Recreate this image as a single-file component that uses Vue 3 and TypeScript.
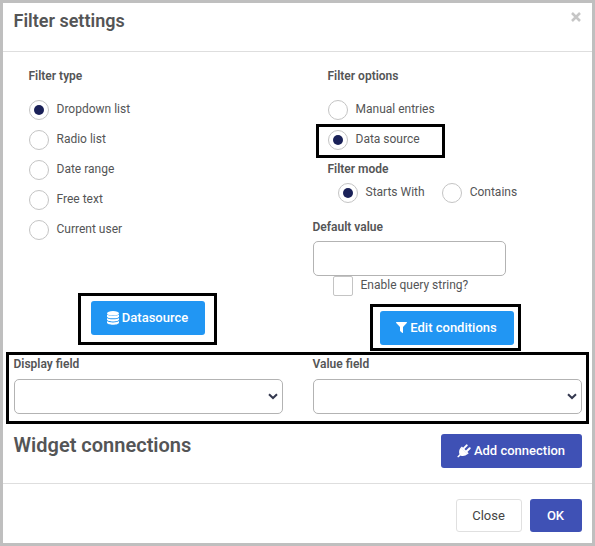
<script setup lang="ts">
import { ref } from 'vue'

const filterTypes: string[] = ['Dropdown list', 'Radio list', 'Date range', 'Free text', 'Current user']
const filterOptions: string[] = ['Manual entries', 'Data source']
const filterModes: string[] = ['Starts With', 'Contains']

const filterType = ref('Dropdown list')
const filterOption = ref('Data source')
const filterMode = ref('Starts With')
const defaultValue = ref('')
const queryString = ref(false)
</script>

<template>
  <div class="dialog">
    <header class="header">
      <h1 class="title">Filter settings</h1>
      <button class="dismiss" aria-label="Close dialog">
        <svg width="10" height="10" viewBox="0 0 10 10"><path d="M1 1L9 9M9 1L1 9" stroke="#c6c6c6" stroke-width="2.5" /></svg>
      </button>
    </header>

    <main class="body">
      <div class="columns">
        <section class="types">
          <h2 class="label inset">Filter type</h2>
          <div class="radios inset">
            <label v-for="t in filterTypes" :key="t" class="choice">
              <input v-model="filterType" type="radio" name="type" :value="t" class="radio" />
              <span>{{ t }}</span>
            </label>
          </div>
          <div class="marked mark-source">
            <button class="btn info source">
              <svg width="12" height="14" viewBox="0 0 12 14" fill="#fff">
                <ellipse cx="6" cy="2.3" rx="6" ry="2.3" />
                <path d="M0 3.6C1.2 5.5 10.8 5.5 12 3.6V5.4C12 8 0 8 0 5.4ZM0 6.9C1.2 8.8 10.8 8.8 12 6.9V8.5C12 11.1 0 11.1 0 8.5ZM0 10C1.2 11.9 10.8 11.9 12 10V11.6C12 14.6 0 14.6 0 11.6Z" />
              </svg>
              <span>Datasource</span>
            </button>
          </div>
        </section>

        <section class="options">
          <h2 class="label inset">Filter options</h2>
          <div class="radios inset">
            <label v-for="o in filterOptions" :key="o" class="choice" :class="{ 'marked mark-option': o === 'Data source' }">
              <input v-model="filterOption" type="radio" name="option" :value="o" class="radio" />
              <span>{{ o }}</span>
            </label>
          </div>
          <h2 class="label inset mode-label">Filter mode</h2>
          <div class="modes">
            <label v-for="m in filterModes" :key="m" class="choice mode">
              <input v-model="filterMode" type="radio" name="mode" :value="m" class="radio" />
              <span>{{ m }}</span>
            </label>
          </div>
          <h2 class="label default-label">Default value</h2>
          <input v-model="defaultValue" type="text" class="field default" aria-label="Default value" />
          <label class="choice query">
            <input v-model="queryString" type="checkbox" class="check" />
            <span>Enable query string?</span>
          </label>
          <div class="marked mark-edit">
            <button class="btn info edit">
              <svg width="11" height="11" viewBox="0 0 11 11" fill="#fff"><path d="M.4 0H10.6Q11.3.4 10.8 1L7 5V10.4Q6.8 11.2 6.1 10.8L4.3 9.2Q4 9 4 8.5V5L.2 1Q-.2.4.4 0Z" /></svg>
              <span>Edit conditions</span>
            </button>
          </div>
        </section>
      </div>

      <section class="fields marked mark-fields">
        <div v-for="f in ['Display field', 'Value field']" :key="f" class="select-group">
          <h2 class="label">{{ f }}</h2>
          <div class="field select" role="combobox" :aria-label="f" tabindex="0">
            <svg width="10" height="7" viewBox="0 0 10 7"><path d="M1 1.2L5 5L9 1.2" fill="none" stroke="#34384f" stroke-width="2" /></svg>
          </div>
        </div>
      </section>

      <section class="connections">
        <h1 class="subtitle">Widget connections</h1>
        <button class="btn primary add">
          <svg width="14" height="14" viewBox="0 0 14 14">
            <path d="M3.9 3.6L10.6 10.1C8.7 12 5.4 12.5 3.6 11.4L1.2 13.6L.2 12.7L2.5 10.3C1.6 8.2 2.1 5.4 3.9 3.6Z" fill="#fff" />
            <path d="M4.9 2.6L11.7 9.2L10.6 10.3L3.8 3.7Z" fill="#fff" />
            <path d="M6.5 4.6L9.7 1.4M9.4 7.5L12.7 4.2" stroke="#fff" stroke-width="2" stroke-linecap="round" />
          </svg>
          <span>Add connection</span>
        </button>
      </section>
    </main>

    <footer class="footer">
      <button class="btn plain">Close</button>
      <button class="btn primary ok">OK</button>
    </footer>
  </div>
</template>

<style>
body {
  margin: 0;
  background: #fff;
}
</style>

<style scoped>
* {
  box-sizing: border-box;
}
.dialog {
  display: flex;
  flex-direction: column;
  width: 595px;
  height: 546px;
  border: 3px solid #bfbfbf;
  background: #fff;
  color: #545556;
  font-family: Roboto, "Liberation Sans", sans-serif;
  font-size: 12px;
}
.header {
  display: flex;
  justify-content: space-between;
  align-items: flex-start;
  height: 49px;
  padding: 7px 11px 0 10.5px;
  border-bottom: 1px solid #dedede;
}
h1,
h2 {
  margin: 0;
}
.title {
  font-size: 18px;
  line-height: 22px;
  font-weight: 600;
}
.dismiss {
  display: flex;
  margin-top: 2px;
  padding: 0;
  border: 0;
  background: none;
}
.body {
  height: 431px;
  padding: 0 10px 0 11px;
}
.columns {
  display: grid;
  grid-template-columns: 269px 269px;
  column-gap: 30px;
  height: 303px;
  padding-top: 16px;
}
.label {
  font-size: 12px;
  line-height: 16px;
  font-weight: 600;
  text-indent: -0.5px;
}
.inset {
  margin-left: 15px;
}
.radios {
  display: flex;
  flex-direction: column;
  align-items: flex-start;
  gap: 10px;
  margin-top: 16px;
}
.choice {
  display: flex;
  height: 20px;
  gap: 7.5px;
  line-height: 18px;
  white-space: nowrap;
}
.radio,
.check {
  appearance: none;
  display: grid;
  place-items: center;
  flex: none;
  width: 20px;
  height: 20px;
  margin: 0;
  border: 1px solid #c4c4c4;
  background: #fff;
}
.radio {
  border-radius: 50%;
}
.radio:checked::before {
  content: "";
  width: 10px;
  height: 10px;
  border-radius: 50%;
  background: #1a2158;
}
.check {
  border-radius: 2px;
}
.marked {
  position: relative;
}
.marked::after {
  content: "";
  position: absolute;
  border: 3px solid #000;
  pointer-events: none;
}
.mark-option::after {
  inset: -6px -25px -8px -12px;
}
.mark-source {
  width: 114px;
  margin: 61px 0 0 77px;
}
.mark-source::after {
  inset: -8px -12px -10px -13px;
}
.mode-label {
  margin-top: 11px;
}
.modes {
  display: flex;
  gap: 17.5px;
  margin: 6px 0 0 25px;
}
.default-label {
  margin-top: 16px;
}
.default {
  display: block;
  width: 193px;
  margin-top: 6px;
}
.query {
  margin-left: 20px;
}
.mark-edit {
  width: 134px;
  margin: 15px 0 0 67px;
}
.mark-edit::after {
  inset: -7px -7px -6px -10px;
}
.field {
  height: 35px;
  border: 1px solid #b3b3b3;
  border-radius: 5px;
  background: #fff;
}
.btn {
  display: flex;
  align-items: center;
  justify-content: center;
  height: 34px;
  padding: 0 1px 1px 0;
  border: 0;
  border-radius: 3px;
  font-family: inherit;
  font-size: 13px;
  font-weight: 500;
  color: #fff;
  white-space: nowrap;
}
.info {
  width: 100%;
  background: #2196f3;
}
.source,
.add {
  gap: 3px;
}
.edit {
  gap: 3px;
}
.primary {
  background: #3f51b5;
}
.fields {
  display: flex;
  gap: 30px;
  padding-top: 1px;
}
.mark-fields::after {
  inset: -3px -7px -10px -8px;
}
.select-group {
  width: 269px;
}
.select {
  display: flex;
  align-items: center;
  justify-content: flex-end;
  margin-top: 7px;
  padding-right: 4px;
}
.connections {
  display: flex;
  justify-content: space-between;
  padding-top: 20px;
}
.subtitle {
  margin: -1px 0 0 -0.5px;
  font-size: 20px;
  line-height: 24px;
  font-weight: 600;
}
.add {
  width: 141px;
}
.footer {
  display: flex;
  justify-content: flex-end;
  gap: 8px;
  height: 60px;
  padding: 15px 10px 0 0;
  border-top: 1px solid #dedede;
}
.footer .btn {
  height: 33px;
  padding-bottom: 0;
}
.plain {
  width: 66px;
  border: 1px solid #e0e0e0;
  background: #fff;
  color: #444;
  font-weight: 400;
}
.ok {
  width: 52px;
}
</style>
